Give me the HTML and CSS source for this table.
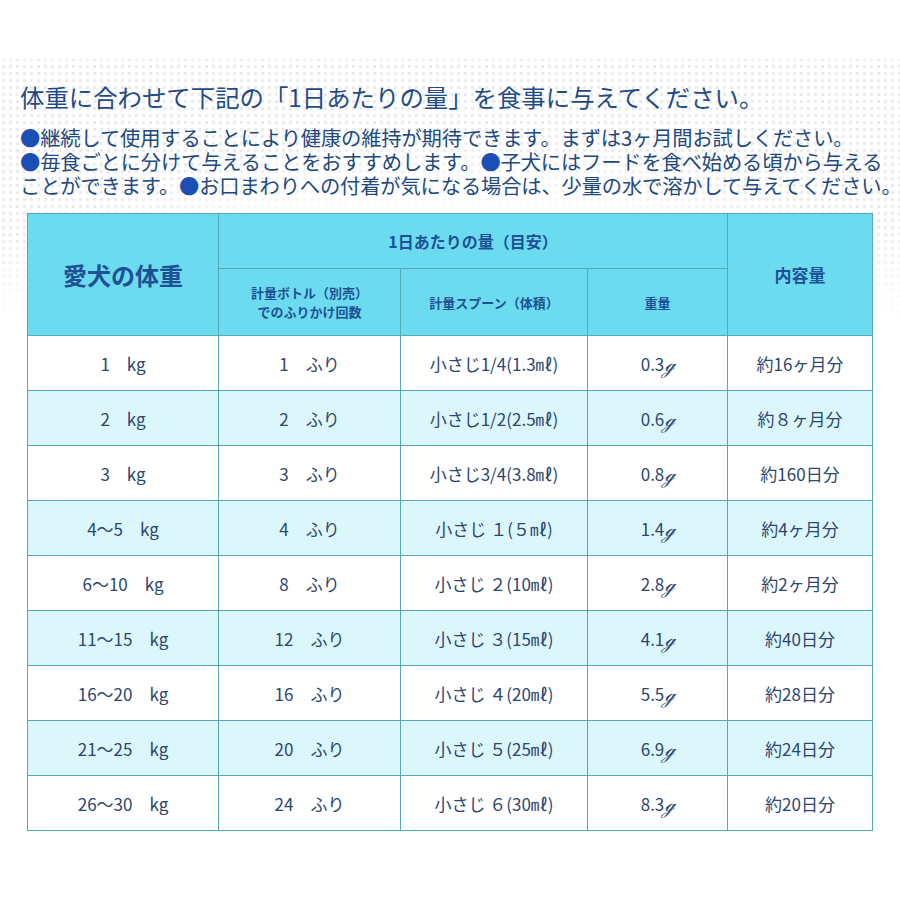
FILE: index.html
```html
<!DOCTYPE html>
<html lang="ja">
<head>
<meta charset="utf-8">
<link rel="stylesheet" href="styles.css">
</head>
<body>
<div class="page">
  <h1 class="title">体重に合わせて下記の「1日あたりの量」を食事に与えてください。</h1>
  <p class="notes"><span class="dot">●</span>継続して使用することにより健康の維持が期待できます。まずは3ヶ月間お試しください。<br><span class="dot">●</span>毎食ごとに分けて与えることをおすすめします。<span class="dot">●</span>子犬にはフードを食べ始める頃から与える<br>ことができます。<span class="dot">●</span>お口まわりへの付着が気になる場合は、少量の水で溶かして与えてください。</p>
  <table class="dose">
    <colgroup>
      <col class="c1"><col class="c2"><col class="c3"><col class="c4"><col class="c5">
    </colgroup>
    <thead>
      <tr class="h1">
        <th rowspan="2" class="big">愛犬の体重</th>
        <th colspan="3" class="mid">1日あたりの量（目安）</th>
        <th rowspan="2" class="mid2">内容量</th>
      </tr>
      <tr class="h2">
        <th class="small">計量ボトル（別売）<br>でのふりかけ回数</th>
        <th class="small">計量スプーン（体積）</th>
        <th class="small">重量</th>
      </tr>
    </thead>
    <tbody>
      <tr><td>1&emsp;kg</td><td>1&emsp;ふり</td><td>小さじ1/4(1.3㎖)</td><td>0.3<span class="g">ℊ</span></td><td>約16ヶ月分</td></tr>
      <tr class="alt"><td>2&emsp;kg</td><td>2&emsp;ふり</td><td>小さじ1/2(2.5㎖)</td><td>0.6<span class="g">ℊ</span></td><td>約８ヶ月分</td></tr>
      <tr><td>3&emsp;kg</td><td>3&emsp;ふり</td><td>小さじ3/4(3.8㎖)</td><td>0.8<span class="g">ℊ</span></td><td>約160日分</td></tr>
      <tr class="alt"><td>4～5&emsp;kg</td><td>4&emsp;ふり</td><td>小さじ １(５㎖)</td><td>1.4<span class="g">ℊ</span></td><td>約4ヶ月分</td></tr>
      <tr><td>6～10&emsp;kg</td><td>8&emsp;ふり</td><td>小さじ ２(10㎖)</td><td>2.8<span class="g">ℊ</span></td><td>約2ヶ月分</td></tr>
      <tr class="alt"><td>11～15&emsp;kg</td><td>12&emsp;ふり</td><td>小さじ ３(15㎖)</td><td>4.1<span class="g">ℊ</span></td><td>約40日分</td></tr>
      <tr><td>16～20&emsp;kg</td><td>16&emsp;ふり</td><td>小さじ ４(20㎖)</td><td>5.5<span class="g">ℊ</span></td><td>約28日分</td></tr>
      <tr class="alt"><td>21～25&emsp;kg</td><td>20&emsp;ふり</td><td>小さじ ５(25㎖)</td><td>6.9<span class="g">ℊ</span></td><td>約24日分</td></tr>
      <tr><td>26～30&emsp;kg</td><td>24&emsp;ふり</td><td>小さじ ６(30㎖)</td><td>8.3<span class="g">ℊ</span></td><td>約20日分</td></tr>
    </tbody>
  </table>
</div>
</body>
</html>
```
FILE: styles.css
```css
html, body {
  margin: 0;
  padding: 0;
}
body {
  width: 900px;
  height: 900px;
  font-family: "Noto Sans CJK JP", "Noto Sans", sans-serif;
  background-color: #ffffff;
  background-image:
    radial-gradient(ellipse 560px 300px at 450px 430px, #ffffff 70%, rgba(255,255,255,0) 100%),
    linear-gradient(to bottom, #ffffff 0, #ffffff 55px, rgba(255,255,255,0) 62px, rgba(255,255,255,0) 230px, #ffffff 330px),
    radial-gradient(circle, #ececec 1.5px, rgba(255,255,255,0) 2.1px);
  background-size: 100% 100%, 100% 100%, 7px 7px;
}
.page {
  padding: 81px 0 0 20px;
}
.title {
  margin: 0;
  font-size: 24.4px;
  line-height: 32px;
  font-weight: 400;
  color: #1f4c86;
  white-space: nowrap;
}
.notes {
  margin: 12px 0 0 0;
  font-size: 20.3px;
  line-height: 24px;
  letter-spacing: -0.15px;
  color: #22497f;
  white-space: nowrap;
}
.dot {
  color: #1b4fb4;
}
.dose {
  margin: 16px 0 0 7px;
  border-collapse: collapse;
  table-layout: fixed;
  width: 845px;
  background: #ffffff;
}
.c1 { width: 191px; }
.c2 { width: 182px; }
.c3 { width: 187px; }
.c4 { width: 140px; }
.c5 { width: 145px; }
.dose th, .dose td {
  border: 1px solid #56a8b3;
  text-align: center;
  padding: 0;
}
.dose th {
  background: #6ddbef;
  color: #1d5193;
  font-weight: 700;
}
.h1 { height: 55px; }
.h2 { height: 67px; }
.big {
  font-size: 24px;
  padding-bottom: 22px;
}
.mid {
  font-size: 16px;
  padding-bottom: 4px;
}
.mid2 {
  font-size: 17px;
  padding-bottom: 12px;
}
.small {
  font-size: 13px;
  line-height: 19px;
}
.dose td {
  height: 54px;
  font-size: 17px;
  color: #2c4670;
}
.dose tr.alt td {
  background: #dcf7fb;
}
.g {
  font-family: "DejaVu Serif", serif;
  font-style: italic;
  font-size: 18px;
}
```
